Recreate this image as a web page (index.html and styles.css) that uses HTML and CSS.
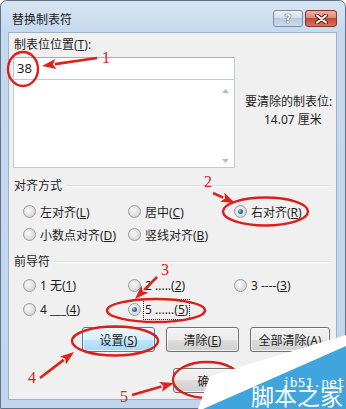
FILE: index.html
```html
<!DOCTYPE html>
<html lang="zh-CN">
<head>
  <meta charset="UTF-8">
  <title>替换制表符</title>
  <link rel="stylesheet" href="styles.css">
</head>
<body>

<div class="window">
  <div class="titlebar">
    <span class="title">替换制表符</span>
    <div class="caption-btns">
      <span class="cap-btn help">?</span>
      <span class="cap-btn close">
        <svg width="13" height="10" viewBox="0 0 13 10">
          <path d="M2,1.5 L11,8.5 M11,1.5 L2,8.5" stroke="#5a1a10" stroke-width="4" stroke-linecap="round"/>
          <path d="M2,1.5 L11,8.5 M11,1.5 L2,8.5" stroke="#fff" stroke-width="2.2" stroke-linecap="round"/>
        </svg>
      </span>
    </div>
  </div>

  <div class="client">
    <div class="field-label">制表位位置(<u>T</u>):</div>

    <div class="top-row">
      <div class="tab-box">
        <div class="tab-input">38</div>
        <div class="tab-list">
          <div class="scroll">
            <svg width="7" height="4" viewBox="0 0 7 4"><path d="M0,4 L3.5,0 L7,4 Z" fill="#b8bcc2"/></svg>
            <svg width="7" height="4" viewBox="0 0 7 4"><path d="M0,0 L3.5,4 L7,0 Z" fill="#b8bcc2"/></svg>
          </div>
        </div>
      </div>
      <div class="clear-info">
        <div>要清除的制表位:</div>
        <div class="clear-value">14.07 厘米</div>
      </div>
    </div>

    <div class="group-title"><span>对齐方式</span></div>
    <div class="radio-grid">
      <label class="radio"><span class="dot"></span><span>左对齐(<u>L</u>)</span></label>
      <label class="radio"><span class="dot"></span><span>居中(<u>C</u>)</span></label>
      <label class="radio"><span class="dot checked"></span><span>右对齐(<u>R</u>)</span></label>
      <label class="radio"><span class="dot"></span><span>小数点对齐(<u>D</u>)</span></label>
      <label class="radio"><span class="dot"></span><span>竖线对齐(<u>B</u>)</span></label>
    </div>

    <div class="group-title leader-title"><span>前导符</span></div>
    <div class="radio-grid leaders">
      <label class="radio"><span class="dot"></span><span>1 无(<u>1</u>)</span></label>
      <label class="radio"><span class="dot"></span><span>2 .....(<u>2</u>)</span></label>
      <label class="radio"><span class="dot"></span><span>3 ----(<u>3</u>)</span></label>
      <label class="radio"><span class="dot"></span><span>4 ___(<u>4</u>)</span></label>
      <label class="radio"><span class="dot checked"></span><span class="focus">5 ......(<u>5</u>)</span></label>
    </div>

    <div class="btn-row">
      <span class="btn default"><span>设置(<u>S</u>)</span></span>
      <span class="btn"><span>清除(<u>E</u>)</span></span>
      <span class="btn wide"><span>全部清除(<u>A</u>)</span></span>
    </div>

    <div class="btn-row ok-row">
      <span class="btn">确定</span>
      <span class="btn">取消</span>
    </div>
  </div>
</div>

<!-- red notes and site watermark lie over the dialog -->
<svg class="overlay" width="346" height="409" viewBox="0 0 346 409">
  <defs>
    <marker id="head" markerUnits="userSpaceOnUse" markerWidth="14" markerHeight="10" viewBox="0 0 14 10" refX="1" refY="5" orient="auto">
      <path d="M0,0 L14,5 L0,10 L3,5 Z" fill="#dc2219"/>
    </marker>
  </defs>
  <g fill="none" stroke="#d8201a" stroke-width="2.4">
    <ellipse cx="23" cy="69" rx="15" ry="17"/>
    <ellipse cx="265.5" cy="211.5" rx="42.5" ry="14"/>
    <ellipse cx="156" cy="310.5" rx="49" ry="11.5"/>
    <ellipse cx="115" cy="341" rx="43" ry="14.5"/>
    <ellipse cx="207" cy="380" rx="34" ry="18"/>
  </g>
  <g stroke="#dc2219" stroke-width="2.6" marker-end="url(#head)">
    <line x1="97" y1="58" x2="54.9" y2="64.1"/>
    <line x1="213" y1="193" x2="223.2" y2="197.6"/>
    <line x1="157" y1="277" x2="144.2" y2="289.8"/>
    <line x1="40" y1="378" x2="63.7" y2="359.9"/>
    <line x1="132" y1="395" x2="161.5" y2="386.6"/>
  </g>
  <g class="note-num">
    <text x="102" y="63">1</text>
    <text x="204" y="187">2</text>
    <text x="161" y="275">3</text>
    <text x="28" y="383">4</text>
    <text x="120" y="402">5</text>
  </g>
  <polygon points="346,335 210,376 198,409 346,409" fill="#ffffff"/>
  <polygon points="346,346 203,409 346,409" fill="#41a5dd"/>
  <text class="wm-url" x="282" y="387">jb51.net</text>
  <text class="wm-name" x="251" y="405">脚本之家</text>
</svg>

</body>
</html>
```

FILE: styles.css
```css
body {
  margin: 0;
  width: 346px;
  height: 409px;
  overflow: hidden;
  position: relative;
  font-family: "Noto Sans", "Noto Sans CJK SC", sans-serif;
  font-size: 12px;
  color: #1e1e1e;
  background: #fff;
}
u {
  text-decoration: underline;
  text-underline-offset: 1px;
}
.window {
  box-sizing: border-box;
  width: 346px;
  height: 409px;
  display: flex;
  flex-direction: column;
  border: 1px solid #5f7389;
  border-radius: 7px 7px 0 0;
  background: linear-gradient(to bottom, #d8e6f4 0, #c6d9ee 30px, #c1d5ec 100%);
}
.titlebar {
  height: 31px;
  box-sizing: border-box;
  display: flex;
  align-items: center;
  padding: 4px 8px 0 11px;
}
.title {
  font-size: 12px;
  color: #1b1b1b;
}
.caption-btns {
  margin-left: auto;
  display: flex;
  gap: 2px;
}
.cap-btn {
  box-sizing: border-box;
  height: 17px;
  display: flex;
  align-items: center;
  justify-content: center;
  border-radius: 3px;
  border: 1px solid #7b8da3;
}
.help {
  width: 30px;
  background: linear-gradient(to bottom, #e8eff7 0, #d3dfec 50%, #b9cbe0 50%, #cddcec 100%);
  color: #fff;
  font-family: "DejaVu Sans", sans-serif;
  font-weight: bold;
  font-size: 12px;
  text-shadow: 0 0 1px #3c4f66, 0 0 1px #3c4f66, 0 0 1px #3c4f66;
}
.close {
  width: 32px;
  border-color: #86372a;
  background: linear-gradient(to bottom, #eab0a3 0, #dc8a77 45%, #c54a33 50%, #d5745f 100%);
}
.client {
  flex: 1;
  margin: 0 8px 8px 7px;
  box-sizing: border-box;
  background: #f0f0f0;
  border: 1px solid #9fb1c6;
  padding: 4px 0 0 4px;
}
.field-label {
  line-height: 16px;
  padding-left: 1px;
}
.top-row {
  display: flex;
  margin-top: 4px;
}
.tab-box {
  width: 222px;
}
.tab-input {
  box-sizing: border-box;
  height: 23px;
  line-height: 21px;
  padding-left: 3px;
  font-size: 13px;
  background: #fff;
  border: 1px solid #c5cad1;
  border-top-color: #abadb3;
}
.tab-list {
  box-sizing: border-box;
  height: 88px;
  background: #fff;
  border: 1px solid #c5cad1;
  border-top: 0;
  display: flex;
  justify-content: flex-end;
}
.scroll {
  width: 17px;
  display: flex;
  flex-direction: column;
  justify-content: space-between;
  align-items: center;
  padding: 9px 0 4px;
}
.clear-info {
  padding: 36px 0 0 10px;
  line-height: 18px;
}
.clear-value {
  padding-left: 19px;
}
.group-title {
  display: flex;
  align-items: center;
  gap: 4px;
  line-height: 16px;
  margin-top: 10px;
  padding-left: 1px;
  margin-right: 4px;
}
.group-title::after {
  content: "";
  flex: 1;
  height: 0;
  border-top: 1px solid #d5dfe5;
  border-bottom: 1px solid #fff;
}
.leader-title {
  margin-top: 8px;
}
.radio-grid {
  display: grid;
  grid-template-columns: 105px 106px 105px;
  grid-auto-rows: 23px;
  padding-left: 10px;
  margin-top: 6px;
}
.radio-grid.leaders {
  grid-auto-rows: 24px;
  margin-top: 3px;
}
.radio {
  display: flex;
  align-items: center;
  gap: 4px;
  white-space: nowrap;
}
.dot {
  box-sizing: border-box;
  width: 13px;
  height: 13px;
  border-radius: 50%;
  border: 1px solid #999b9e;
  background: radial-gradient(circle at 40% 40%, #fbfbfb 0, #e4e4e4 45%, #c9c9c9 100%);
  display: flex;
  align-items: center;
  justify-content: center;
  flex: none;
}
.dot.checked::before {
  content: "";
  width: 5px;
  height: 5px;
  border-radius: 50%;
  background: radial-gradient(circle at 35% 35%, #9cc6e8 0, #2c6ca6 50%, #183f66 100%);
}
.focus {
  outline: 1px dotted #222;
  outline-offset: 1px;
}
.btn-row {
  display: flex;
  gap: 11px;
  padding-left: 69px;
  margin-top: 6px;
}
.ok-row {
  padding-left: 160px;
  margin-top: 16px;
}
.btn {
  box-sizing: border-box;
  width: 73px;
  height: 25px;
  display: flex;
  align-items: center;
  justify-content: center;
  white-space: nowrap;
  border: 1px solid #707070;
  border-radius: 3px;
  background: linear-gradient(to bottom, #f2f2f2 0, #ebebeb 50%, #dddddd 50%, #cfcfcf 100%);
  box-shadow: inset 0 0 0 1px rgba(255,255,255,0.7);
}
.btn.wide {
  width: 80px;
}
.btn.default {
  border-color: #3c7fb1;
  background: linear-gradient(to bottom, #eaf6fd 0, #d9f0fc 50%, #bee6fd 50%, #a7d9f5 100%);
}
.overlay {
  position: absolute;
  top: 0;
  left: 0;
  pointer-events: none;
}
.note-num text {
  font-family: "Liberation Serif", serif;
  font-size: 16px;
  fill: #d8201a;
}
.wm-url {
  font-family: "DejaVu Sans Mono", monospace;
  font-size: 13px;
  fill: #fff;
}
.wm-name {
  font-family: "Noto Sans CJK SC", sans-serif;
  font-size: 23px;
  fill: #fff;
}
```
